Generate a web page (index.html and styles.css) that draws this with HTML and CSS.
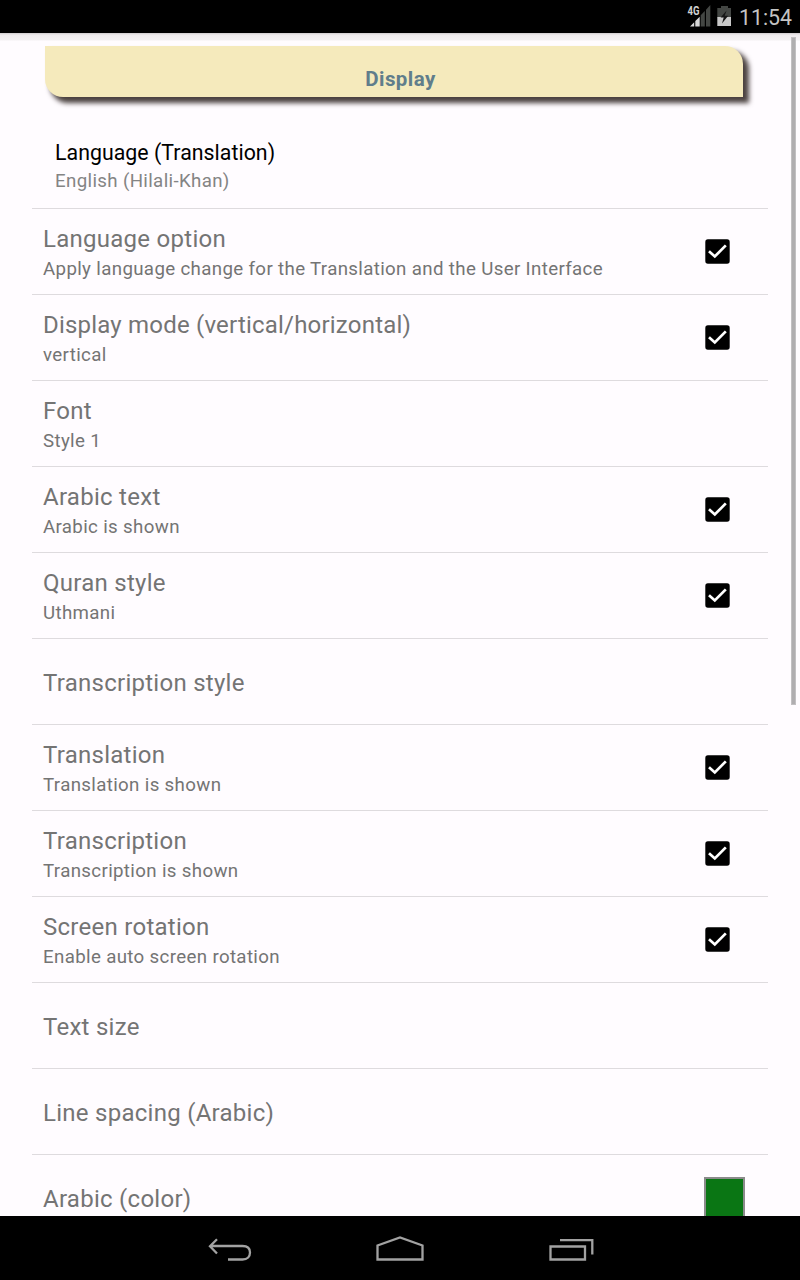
FILE: index.html
```html
<!DOCTYPE html>
<html lang="en">
<head>
<meta charset="utf-8">
<title>Display settings</title>
<link rel="stylesheet" href="styles.css">
</head>
<body>
<svg class="defs" aria-hidden="true">
  <symbol id="check" viewBox="0 0 25 25">
    <rect x="0.3" y="0.3" width="24.4" height="24.4" rx="2.6" fill="#000"/>
    <path d="M4 12.2L9.800 17.500L20.800 6.400" fill="none" stroke="#fff" stroke-width="2.700"/>
  </symbol>
</svg>
<header class="status">
  <svg class="status-icons" width="50" height="33" viewBox="0 0 50 33">
    <path d="M5 26.500L9.200 22.300V26.500Z M10.300 26.500V20.900L14.700 16.800V26.500Z" fill="#d8d8d8"/>
    <path d="M15.700 26.500V15.300L19.800 11V26.500Z M21 26.500V9.800L25.300 5V26.500Z" fill="#434643"/>
    <text class="network" x="2.600" y="15.200" textLength="12" lengthAdjust="spacingAndGlyphs">4G</text>
    <path d="M36 6H43V8H46V17.500H32.300V8H36Z" fill="#434643"/>
    <path d="M32.300 17H46V26H32.300Z" fill="#c9c9c9"/>
    <path d="M41.600 10.500L35.600 17.500H38.700L37 23.500L43.200 15.700H39.700Z" fill="#161616"/>
  </svg>
  <time class="clock">11:54</time>
</header>
<main class="screen">
  <h1 class="banner">Display</h1>
  <section class="row language">
    <div class="copy"><div class="title">Language (Translation)</div><div class="sub">English (Hilali-Khan)</div></div>
  </section>
  <section class="row">
    <div class="copy"><div class="title">Language option</div><div class="sub">Apply language change for the Translation and the User Interface</div></div>
    <svg class="check"><use href="#check"/></svg>
  </section>
  <section class="row">
    <div class="copy"><div class="title long">Display mode (vertical/horizontal)</div><div class="sub">vertical</div></div>
    <svg class="check"><use href="#check"/></svg>
  </section>
  <section class="row">
    <div class="copy"><div class="title">Font</div><div class="sub">Style 1</div></div>
  </section>
  <section class="row">
    <div class="copy"><div class="title">Arabic text</div><div class="sub">Arabic is shown</div></div>
    <svg class="check"><use href="#check"/></svg>
  </section>
  <section class="row">
    <div class="copy"><div class="title">Quran style</div><div class="sub">Uthmani</div></div>
    <svg class="check"><use href="#check"/></svg>
  </section>
  <section class="row single">
    <div class="copy"><div class="title">Transcription style</div></div>
  </section>
  <section class="row">
    <div class="copy"><div class="title">Translation</div><div class="sub">Translation is shown</div></div>
    <svg class="check"><use href="#check"/></svg>
  </section>
  <section class="row">
    <div class="copy"><div class="title">Transcription</div><div class="sub">Transcription is shown</div></div>
    <svg class="check"><use href="#check"/></svg>
  </section>
  <section class="row">
    <div class="copy"><div class="title">Screen rotation</div><div class="sub">Enable auto screen rotation</div></div>
    <svg class="check"><use href="#check"/></svg>
  </section>
  <section class="row single">
    <div class="copy"><div class="title">Text size</div></div>
  </section>
  <section class="row single">
    <div class="copy"><div class="title">Line spacing (Arabic)</div></div>
  </section>
  <section class="row single">
    <div class="copy"><div class="title">Arabic (color)</div></div>
    <div class="swatch"></div>
  </section>
  <div class="scrollbar"></div>
</main>
<nav class="navbar">
  <svg width="48" height="28" viewBox="0 0 48 28"><path d="M6.500 10H38.500C43.500 10 46 12.500 46 16.500S43.500 23.500 38.500 23.500H24M13 3.300L6 10.300L13 17.500"/></svg>
  <svg width="50" height="28" viewBox="0 0 50 28"><path d="M2.500 23.500V9.500L25 1.500L47.500 9.500V23.500Z"/></svg>
  <svg width="48" height="28" viewBox="0 0 48 28"><path d="M2.500 10.500H37V23.500H2.500ZM12 4.200H44.300V18.500"/></svg>
</nav>
</body>
</html>
```
FILE: styles.css
```css
* { box-sizing: border-box; }
body {
  margin: 0;
  width: 800px;
  height: 1280px;
  display: flex;
  flex-direction: column;
  overflow: hidden;
  background: #fffcff;
  font-family: Roboto, "Liberation Sans", sans-serif;
}
.defs { display: none; }
.status {
  flex: none;
  height: 33px;
  display: flex;
  justify-content: flex-end;
  align-items: flex-start;
  background: #000;
  padding-right: 8px;
}
.status-icons { flex: none; margin-right: 4px; }
.network { font-size: 12px; font-weight: 700; fill: #d0d0d0; }
.clock {
  color: #c4c4c4;
  font-size: 21.3px;
  line-height: 36px;
  height: 33px;
  width: 53px;
  white-space: nowrap;
}
.screen {
  position: relative;
  flex: none;
  height: 1183px;
  overflow: hidden;
  padding: 13px 32px 0;
  background: linear-gradient(#cfcbcd 0, #efebed 2px, #f4f1f3 7px, #fffcff 8px);
}
.banner {
  margin: 0 25px 29px 13px;
  height: 51px;
  padding-left: 13px;
  border-radius: 0 18px 0 18px;
  background: #f5eabc;
  box-shadow: 5.5px 5.5px 5px #4b4240;
  color: #607d8b;
  font-size: 20.5px;
  letter-spacing: 0.45px;
  font-weight: 700;
  line-height: 67px;
  text-align: center;
}
.row {
  display: flex;
  align-items: flex-start;
  height: 86px;
  padding: 15px 38px 0 11px;
  border-bottom: 1px solid #dedbde;
}
.copy { flex: 1; white-space: nowrap; color: #747474; }
.title { font-size: 24px; line-height: 30px; letter-spacing: 0.27px; }
.title.long { letter-spacing: 0.2px; }
.sub { font-size: 18.7px; line-height: 30px; letter-spacing: 0.35px; }
.language { height: 83px; padding: 13px 23px 0; }
.language .title { font-size: 21.3px; line-height: 28px; letter-spacing: 0.04px; color: #000; }
.language .sub { line-height: 28px; color: #848484; }
.single { padding-top: 29px; }
.check { width: 25px; height: 25px; margin-top: 15px; }
.swatch {
  flex: none;
  width: 41px;
  height: 62px;
  margin: -7px -15px 0 0;
  border: 2px solid #8b8b8b;
  background: #0a7614;
}
.scrollbar {
  position: absolute;
  top: 4px;
  right: 4px;
  width: 5px;
  height: 668px;
  border: 1px solid #c2c0c2;
  background: #b0aeb0;
}
.navbar {
  flex: none;
  height: 64px;
  display: flex;
  justify-content: center;
  align-items: flex-start;
  gap: 123px;
  padding-top: 20px;
  background: #000;
}
.navbar path { fill: none; stroke: #a2a2a2; stroke-width: 2.3; }
```
